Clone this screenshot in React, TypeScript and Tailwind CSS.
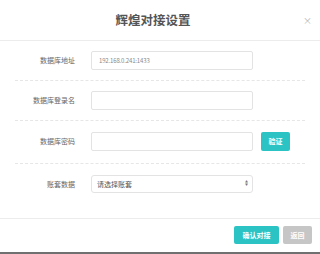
import React from "react";

const font = { fontFamily: '"Noto Sans CJK SC", "Noto Sans", sans-serif' };

function Row({
  label,
  children,
  className,
  last,
}: {
  label: string;
  children: React.ReactNode;
  className: string;
  last?: boolean;
}) {
  return (
    <div className={`flex items-center ${className} ${last ? "" : "border-b border-dashed border-[#e6e6e6]"}`}>
      <label className="w-[60px] text-right text-[7px] text-[#666] leading-none">{label}</label>
      <div className="ml-[16px] flex items-center">{children}</div>
    </div>
  );
}

function TextInput({ value }: { value?: string }) {
  return (
    <div className="w-[162px] h-[19px] border border-[#e3e3e3] rounded-[2px] bg-white flex items-center px-[7px] text-[6px] text-[#8a8a8a] tracking-tight">
      {value}
    </div>
  );
}

export default function App() {
  return (
    <div className="w-[320px] h-[254px] bg-white flex flex-col relative" style={font}>
      <div className="h-[42px] border-b border-[#ececec] flex items-center justify-center relative">
        <h2 className="text-[12.5px] text-[#555] font-semibold mr-[14px]">辉煌对接设置</h2>
        <span className="absolute right-[8px] top-[14px] text-[9px] text-[#b5b5b5]">×</span>
      </div>

      <div className="px-[15px] pb-[25px]">
        <Row label="数据库地址" className="pt-[10px] pb-[10px]">
          <TextInput value="192.168.0.241:1433" />
        </Row>
        <Row label="数据库登录名" className="pt-[10px] pb-[10px]">
          <TextInput />
        </Row>
        <Row label="数据库密码" className="pt-[11px] pb-[12px]">
          <TextInput />
          <button className="ml-[8px] w-[29px] h-[19px] rounded-[2px] bg-[#2cc3c4] text-white text-[7px] font-bold leading-none">
            验证
          </button>
        </Row>
        <Row label="账套数据" className="pt-[11px]" last>
          <div className="w-[162px] h-[18px] border border-[#e3e3e3] rounded-[3px] bg-white flex items-center justify-between pl-[5px] pr-[4px]">
            <span className="text-[7px] text-[#555] leading-none">请选择账套</span>
            <span className="flex flex-col text-[#777] text-[3px] leading-[3px]">
              <span>▲</span>
              <span>▼</span>
            </span>
          </div>
        </Row>
      </div>

      <div className="border-t border-[#ececec] flex justify-end items-start gap-[4px] pt-[7px] pr-[8px] h-[34px]">
        <button className="w-[45px] h-[18px] rounded-[2px] bg-[#2cc3c4] text-white text-[7px] font-bold leading-none">
          确认对接
        </button>
        <button className="w-[29px] h-[18px] rounded-[2px] bg-[#c6c6c6] text-white text-[7px] font-bold leading-none">
          返回
        </button>
      </div>
      <div className="h-[2px] bg-[#707070]" />
    </div>
  );
}
